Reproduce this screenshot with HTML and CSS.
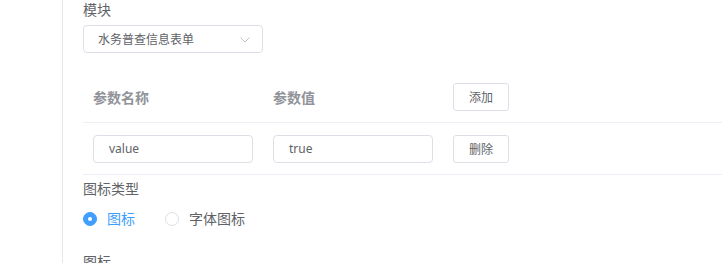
FILE: index.html
```html
<!DOCTYPE html>
<html lang="zh-CN">
<head>
<meta charset="utf-8">
<link rel="stylesheet" href="styles.css">
</head>
<body>
<div class="page">
  <aside class="side"></aside>
  <main class="content">
    <div class="label">模块</div>
    <div class="select">
      <span class="select-text">水务普查信息表单</span>
      <svg class="chevron" width="10" height="6" viewBox="0 0 10 6"><polyline points="0.5,0.5 5,5 9.5,0.5" fill="none" stroke="#c0c4cc" stroke-width="1"/></svg>
    </div>
    <div class="table">
      <div class="row head">
        <div class="cell">参数名称</div>
        <div class="cell">参数值</div>
        <div class="cell"><button class="btn">添加</button></div>
      </div>
      <div class="row">
        <div class="cell"><div class="input">value</div></div>
        <div class="cell"><div class="input">true</div></div>
        <div class="cell"><button class="btn">删除</button></div>
      </div>
    </div>
    <div class="label label-type">图标类型</div>
    <div class="radios">
      <label class="radio checked"><span class="radio-dot"></span><span class="radio-label">图标</span></label>
      <label class="radio"><span class="radio-dot"></span><span class="radio-label">字体图标</span></label>
    </div>
    <div class="label label-icon">图标</div>
  </main>
</div>
</body>
</html>
```
FILE: styles.css
```css
* { box-sizing: border-box; }
html, body { margin: 0; padding: 0; background: #fff; }
body {
  font-family: "Noto Sans", "Noto Sans CJK SC", sans-serif;
  color: #606266;
  font-size: 14px;
  overflow: hidden;
}
.page { display: flex; height: 263px; }
.side { width: 63px; flex: none; border-right: 1px solid #e4e7ed; }
.content { flex: 1; padding-left: 20px; }
.label { font-size: 14px; line-height: 20px; color: #606266; }
.select {
  margin-top: 5px;
  width: 180px;
  height: 28px;
  border: 1px solid #dcdfe6;
  border-radius: 4px;
  display: flex;
  align-items: center;
  justify-content: space-between;
  padding: 0 12px 0 14px;
  font-size: 12px;
  color: #606266;
}
.chevron { display: block; margin-top: 2px; }
.table { margin-top: 18px; }
.row {
  display: flex;
  height: 52px;
  border-bottom: 1px solid #ebeef5;
  align-items: center;
}
.cell { width: 180px; padding: 0 10px; flex: none; }
.head .cell { font-weight: bold; color: #909399; font-size: 14px; }
.input {
  width: 160px;
  height: 28px;
  border: 1px solid #dcdfe6;
  border-radius: 4px;
  padding: 0 15px;
  line-height: 26px;
  font-size: 12px;
  color: #606266;
}
.btn {
  font-family: inherit;
  width: 56px;
  height: 28px;
  border: 1px solid #dcdfe6;
  border-radius: 3px;
  background: #fff;
  color: #606266;
  font-size: 12px;
  padding: 0;
  font-weight: normal;
}
.label-type { margin-top: 4px; }
.radios { display: flex; margin-top: 10px; line-height: 20px; }
.radio { display: flex; align-items: center; margin-right: 30px; }
.radio-dot {
  width: 14px; height: 14px;
  border: 1px solid #dcdfe6;
  border-radius: 50%;
  background: #fff;
  position: relative;
}
.radio.checked .radio-dot { background: #409eff; border-color: #409eff; }
.radio.checked .radio-dot::after {
  content: "";
  position: absolute;
  width: 4px; height: 4px;
  border-radius: 50%;
  background: #fff;
  left: 50%; top: 50%;
  transform: translate(-50%, -50%);
}
.radio-label { padding-left: 10px; font-size: 14px; color: #606266; }
.radio.checked .radio-label { color: #409eff; }
.label-icon { margin-top: 23px; }
```
